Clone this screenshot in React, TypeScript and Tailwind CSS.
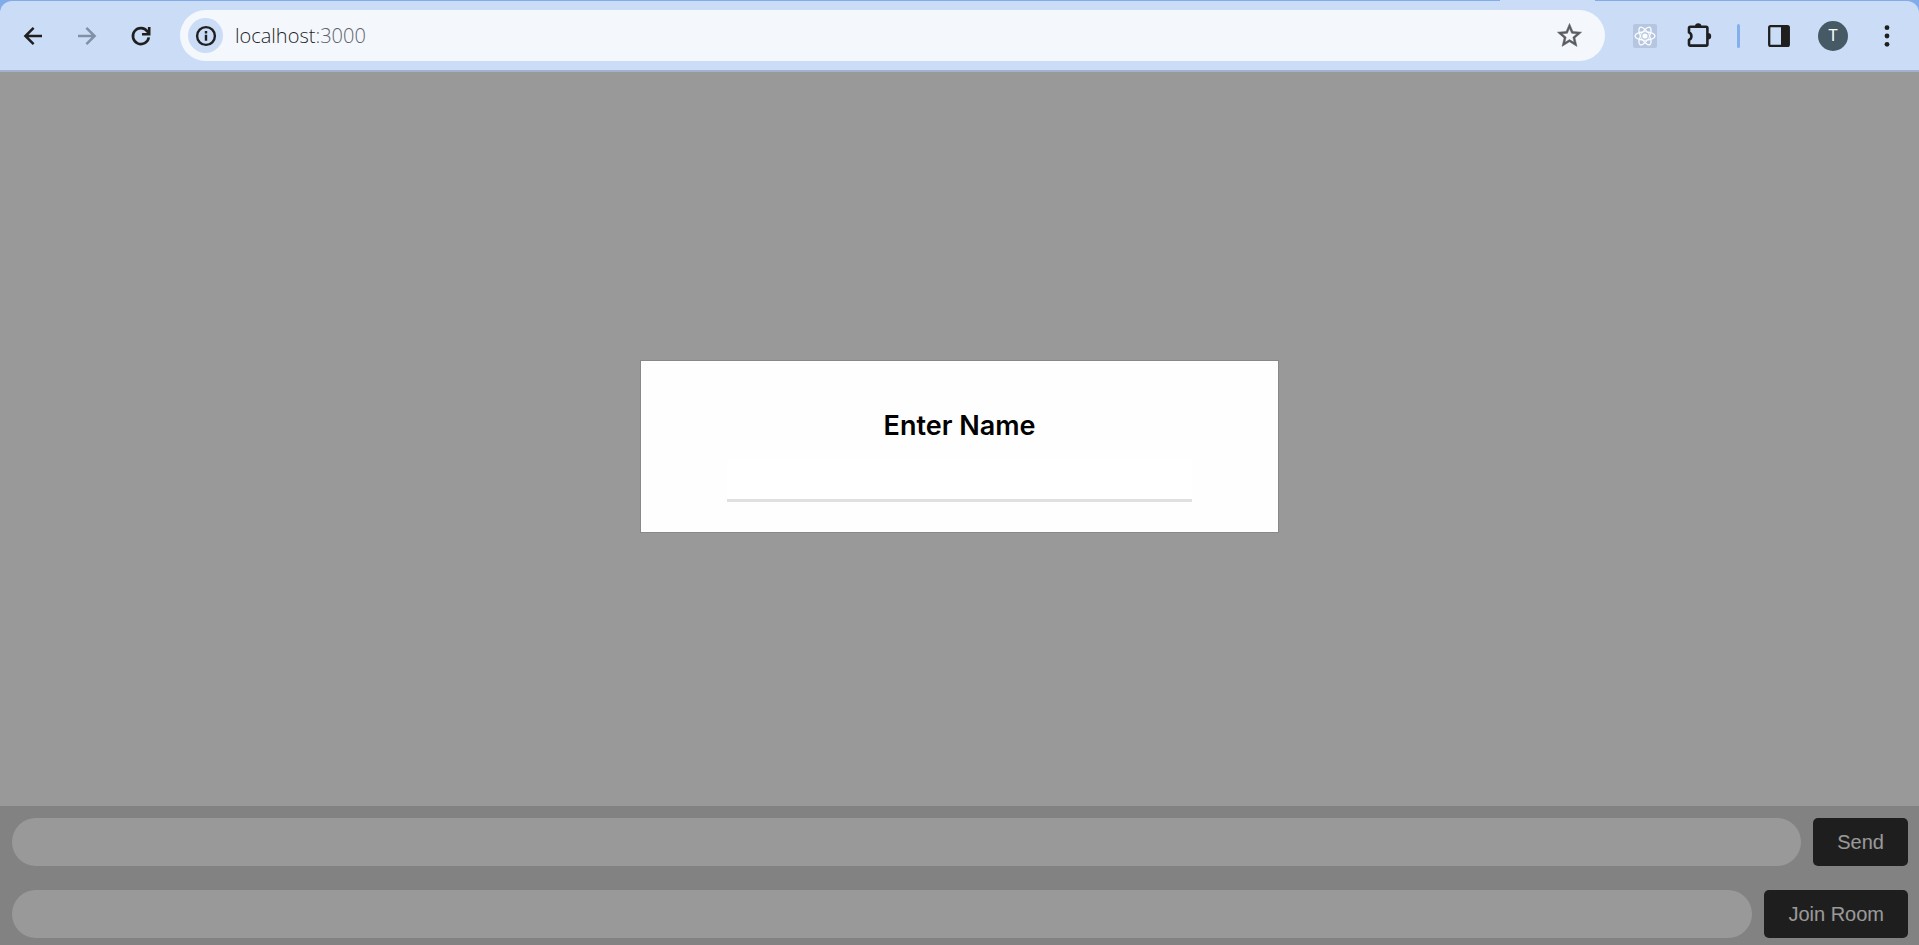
import { useState } from "react";
import type { ReactNode } from "react";

function ToolButton({ label, className, children }: { label: string; className: string; children: ReactNode }) {
  return (
    <button type="button" aria-label={label} className={`flex shrink-0 items-center justify-center ${className}`}>
      {children}
    </button>
  );
}

function BackIcon() {
  return (
    <svg width="24" height="24" viewBox="0 0 24 24" fill="none" stroke="currentColor" strokeWidth="2.5">
      <path d="M21 12H4.6M12.6 3.8 4.4 12l8.2 8.2" />
    </svg>
  );
}

function ForwardIcon() {
  return (
    <svg width="24" height="24" viewBox="0 0 24 24" fill="none" stroke="currentColor" strokeWidth="2.5">
      <path d="M3 12h16.4M11.4 3.8l8.2 8.2-8.2 8.2" />
    </svg>
  );
}

function ReloadIcon() {
  return (
    <svg width="24" height="24" viewBox="0 0 24 24" fill="none" stroke="currentColor" strokeWidth="2.6">
      <path d="M19.8 13.4A8 8 0 1 1 18.4 7.4L19.8 9.4" />
      <path d="M20.2 3v7.2H13" />
    </svg>
  );
}

function InfoIcon() {
  return (
    <svg width="22" height="22" viewBox="0 0 22 22" fill="none" stroke="#1f1f1f" strokeWidth="2.4">
      <circle cx="11" cy="11" r="8.9" />
      <path d="M11 9.8v6M11 6v2.4" />
    </svg>
  );
}

function StarIcon() {
  return (
    <svg width="29" height="29" viewBox="0 0 24 24" fill="#5b5c5f" stroke="#5b5c5f" strokeWidth="0.4">
      <path d="M22 9.24l-7.19-.62L12 2 9.19 8.63 2 9.24l5.46 4.73L5.82 21 12 17.27 18.18 21l-1.63-7.03L22 9.24zM12 15.4l-3.76 2.27 1-4.28-3.32-2.88 4.38-.38L12 6.1l1.71 4.04 4.38.38-3.32 2.88 1 4.28L12 15.4z" />
    </svg>
  );
}

function ReactIcon() {
  return (
    <svg width="24" height="24" viewBox="0 0 24 24" fill="none" stroke="#fbfdff" strokeWidth="1.3">
      <rect width="24" height="24" rx="2" fill="#b6c6e0" stroke="none" />
      <ellipse cx="12" cy="12" rx="10" ry="4" />
      <ellipse cx="12" cy="12" rx="10" ry="4" transform="rotate(60 12 12)" />
      <ellipse cx="12" cy="12" rx="10" ry="4" transform="rotate(120 12 12)" />
      <circle cx="12" cy="12" r="3.8" fill="#b6c6e0" stroke="none" />
      <circle cx="12" cy="12" r="2.6" fill="#fbfdff" stroke="none" />
    </svg>
  );
}

function PuzzleIcon() {
  return (
    <svg width="28" height="28" viewBox="0 0 28 28" fill="none" stroke="#1f1f1f" strokeWidth="2.6" strokeLinejoin="round">
      <path d="M4 6.2Q4 4.8 5.4 4.8H21Q22.4 4.8 22.4 6.2V22.2Q22.4 23.6 21 23.6H5.4Q4 23.6 4 22.2V18A4.2 4.2 0 0 0 4 10.4Z" />
      <path d="M10 4.4a3.2 3.2 0 0 1 6.4 0ZM23 11a3.2 3.2 0 0 1 0 6.4Z" fill="#1f1f1f" stroke="none" />
    </svg>
  );
}

function SidePanelIcon() {
  return (
    <svg width="22" height="22" viewBox="0 0 22 22">
      <rect x="1.2" y="1.2" width="19.6" height="19.6" rx="1.4" fill="none" stroke="#1f1f1f" strokeWidth="2.3" />
      <path d="M13 1h7v20h-7z" fill="#1f1f1f" />
    </svg>
  );
}

function MenuIcon() {
  return (
    <svg width="6" height="22" viewBox="0 0 6 22" fill="#1f1f1f">
      <circle cx="3" cy="2.7" r="2.4" />
      <circle cx="3" cy="11" r="2.4" />
      <circle cx="3" cy="19.3" r="2.4" />
    </svg>
  );
}

function AddressField() {
  const [address, setAddress] = useState("localhost:3000");
  const [editing, setEditing] = useState(false);
  const [host, port] = address.split(":");
  return (
    <div className="relative ml-3 h-7 grow font-['Open_Sans',sans-serif] text-[20px] font-[350] leading-7">
      {!editing && (
        <p>
          {host}
          {port !== undefined && <span className="text-[#5f6368]">:{port}</span>}
        </p>
      )}
      <input
        type="text"
        aria-label="Address"
        value={editing ? address : ""}
        onFocus={() => setEditing(true)}
        onBlur={() => setEditing(false)}
        onChange={(event) => setAddress(event.target.value)}
        className="absolute inset-0 w-full bg-transparent outline-none"
      />
    </div>
  );
}

function BrowserBar() {
  return (
    <header className="bg-[#82abe9]">
      <div className="flex h-px justify-end pr-[324px]">
        <div className="w-[95px] bg-[#cbdcf6]" />
      </div>
      <div className="flex h-[71px] items-center rounded-t-xl border-b-2 border-[#a2b1cd] bg-[#cbdcf6] pl-1.5 pr-[17px] text-[#1f1f1f]">
        <ToolButton label="Back" className="h-9 w-[54px]"><BackIcon /></ToolButton>
        <ToolButton label="Forward" className="h-9 w-[54px] text-[#8290a6]"><ForwardIcon /></ToolButton>
        <ToolButton label="Reload" className="h-9 w-[54px]"><ReloadIcon /></ToolButton>
        <div className="ml-3 flex h-[51px] grow items-center rounded-full bg-[#f4f8fd] pl-2 pr-[21px]">
          <ToolButton label="View site information" className="size-[35px] rounded-full bg-[#cbdcf6]"><InfoIcon /></ToolButton>
          <AddressField />
          <ToolButton label="Bookmark this tab" className="h-9 w-[29px]"><StarIcon /></ToolButton>
        </div>
        <ToolButton label="React Developer Tools" className="ml-7 h-9 w-6"><ReactIcon /></ToolButton>
        <ToolButton label="Extensions" className="ml-7 h-9 w-7"><PuzzleIcon /></ToolButton>
        <div className="ml-6 h-6 w-[3px] rounded-full bg-[#85aeec]" />
        <ToolButton label="Side panel" className="ml-7 h-9 w-[22px]"><SidePanelIcon /></ToolButton>
        <ToolButton label="Profile" className="ml-7 size-[30px] rounded-full bg-[#455a64] font-['Roboto',sans-serif] text-base text-white">T</ToolButton>
        <ToolButton label="Menu" className="ml-6 h-9 w-[30px]"><MenuIcon /></ToolButton>
      </div>
    </header>
  );
}

function MessageRow({ label, action }: { label: string; action: string }) {
  return (
    <form className="flex gap-3" onSubmit={(event) => event.preventDefault()}>
      <input type="text" aria-label={label} className="h-12 min-w-0 grow rounded-full bg-white px-5 text-xl outline-none" />
      <button type="submit" className="h-12 shrink-0 rounded-[5px] bg-[#333] px-6 text-xl text-white">{action}</button>
    </form>
  );
}

export default function App() {
  return (
    <div className="flex min-h-screen flex-col font-['Liberation_Sans',Arial,sans-serif]">
      <BrowserBar />
      <main className="relative flex grow flex-col bg-white">
        <div className="grow" />
        <footer className="flex flex-col gap-6 bg-[#d9d9d9] pb-[7px] pl-3 pr-[11px] pt-3">
          <MessageRow label="Message" action="Send" />
          <MessageRow label="Room" action="Join Room" />
        </footer>
        <div className="absolute inset-0 flex items-start justify-center bg-black/40 pt-[288px]">
          <form
            role="dialog"
            aria-labelledby="name-label"
            onSubmit={(event) => event.preventDefault()}
            className="flex w-1/3 flex-col items-center border border-[#888] bg-[#fefefe] px-5 pb-[30px] pt-11"
          >
            <label id="name-label" htmlFor="name" className="font-['Inter',sans-serif] text-[27px] font-semibold leading-[42px] text-black">
              Enter Name
            </label>
            <input id="name" type="text" className="mt-3 h-[43px] w-7/9 border-b-[3px] border-[#e0e0e0] bg-white px-3 text-xl outline-none" />
          </form>
        </div>
      </main>
    </div>
  );
}
